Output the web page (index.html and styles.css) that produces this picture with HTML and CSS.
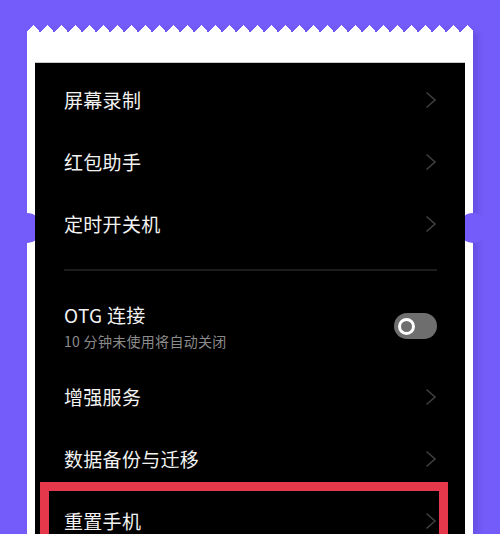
FILE: index.html
```html
<!DOCTYPE html>
<html lang="zh">
<head>
<meta charset="utf-8">
<link rel="stylesheet" href="styles.css">
</head>
<body>
<div class="paper">
  <div class="notch notch-left"></div>
  <div class="notch notch-right"></div>
  <div class="screen">
    <div class="row"><span class="label">屏幕录制</span><svg class="chev" viewBox="0 0 12 18"><polyline points="1.5,1.5 10,9 1.5,16.5"/></svg></div>
    <div class="row"><span class="label">红包助手</span><svg class="chev" viewBox="0 0 12 18"><polyline points="1.5,1.5 10,9 1.5,16.5"/></svg></div>
    <div class="row"><span class="label">定时开关机</span><svg class="chev" viewBox="0 0 12 18"><polyline points="1.5,1.5 10,9 1.5,16.5"/></svg></div>
    <div class="divider"></div>
    <div class="row row-otg">
      <div class="otg-text">
        <span class="label">OTG 连接</span>
        <span class="sub">10 分钟未使用将自动关闭</span>
      </div>
      <div class="toggle"><span class="knob"></span></div>
    </div>
    <div class="row"><span class="label">增强服务</span><svg class="chev" viewBox="0 0 12 18"><polyline points="1.5,1.5 10,9 1.5,16.5"/></svg></div>
    <div class="row"><span class="label">数据备份与迁移</span><svg class="chev" viewBox="0 0 12 18"><polyline points="1.5,1.5 10,9 1.5,16.5"/></svg></div>
    <div class="row"><span class="label">重置手机</span><svg class="chev" viewBox="0 0 12 18"><polyline points="1.5,1.5 10,9 1.5,16.5"/></svg></div>
  </div>
</div>
<div class="highlight"></div>
</body>
</html>
```
FILE: styles.css
```css
html, body {
  margin: 0;
  padding: 0;
}
body {
  width: 500px;
  height: 534px;
  overflow: hidden;
  background: #745cfa;
  font-family: "Noto Sans CJK SC", "Noto Sans", "Liberation Sans", sans-serif;
  position: relative;
}
.paper {
  position: relative;
  margin: 32px 0 0 27px;
  width: 446px;
  height: 502px;
  background: #ffffff;
  padding: 30px 8px 0 8px;
  box-sizing: border-box;
  box-shadow: 5px 0 6px rgba(40, 20, 120, 0.18);
}
.paper::before {
  content: "";
  position: absolute;
  left: 0;
  right: 0;
  top: -7px;
  height: 7px;
  background: conic-gradient(from 135deg at 50% 0, #ffffff 90deg, transparent 0) -1px 0 / 14px 7px repeat-x;
}
.notch {
  position: absolute;
  top: 181px;
  width: 30px;
  height: 30px;
  border-radius: 50%;
  background: #745cfa;
}
.notch-left { left: -15px; }
.notch-right { right: -15px; }
.screen {
  position: relative;
  background: #000000;
  height: 100%;
  overflow: hidden;
  border-top: 1px solid #c9c9c9;
  padding-top: 6px;
  box-sizing: border-box;
  color: #f2f2f2;
}
.row {
  height: 62px;
  flex-shrink: 0;
  display: flex;
  align-items: center;
  justify-content: space-between;
  padding: 0 28px 0 29px;
}
.label {
  font-size: 19px;
  line-height: 24px;
  letter-spacing: 0.3px;
}
.chev {
  width: 12px;
  height: 18px;
  fill: none;
  stroke: #3f3f3f;
  stroke-width: 1.6;
}
.divider {
  height: 2px;
  background: #1c1c1c;
  margin: 14px 28px 0 29px;
}
.row-otg {
  height: 95px;
  align-items: flex-start;
  padding-top: 32px;
  box-sizing: border-box;
}
.otg-text {
  display: flex;
  flex-direction: column;
}
.sub {
  font-size: 14px;
  line-height: 18px;
  color: #8b8b8b;
  margin-top: 5px;
  letter-spacing: 0.3px;
}
.toggle {
  width: 43px;
  height: 26px;
  border-radius: 13px;
  background: #6e6e6e;
  display: flex;
  align-items: center;
  padding-left: 4px;
  box-sizing: border-box;
  margin-top: 10px;
}
.knob {
  width: 17px;
  height: 17px;
  border-radius: 50%;
  border: 3px solid #ffffff;
  box-sizing: border-box;
}
.highlight {
  position: absolute;
  left: 40px;
  top: 482px;
  width: 408px;
  height: 52px;
  border: 9px solid #e5384b;
  border-bottom: none;
  box-sizing: border-box;
}
```
